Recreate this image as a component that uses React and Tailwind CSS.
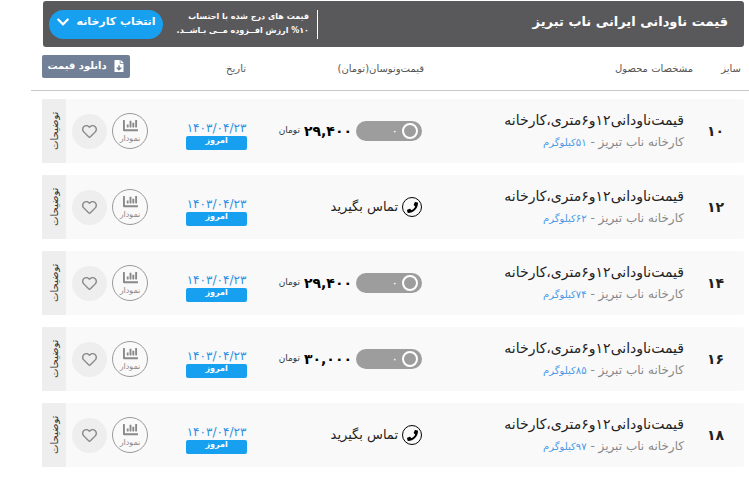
import { FaChartBar, FaChevronDown, FaFileDownload, FaPhone, FaRegHeart } from 'react-icons/fa';

const rows = [
  { size: '۱۰', weight: '۵۱', price: '۲۹,۴۰۰' },
  { size: '۱۲', weight: '۶۲', price: null },
  { size: '۱۴', weight: '۷۴', price: '۲۹,۴۰۰' },
  { size: '۱۶', weight: '۸۵', price: '۳۰,۰۰۰' },
  { size: '۱۸', weight: '۹۷', price: null },
];

const PriceHeader = () => (
  <header className="flex h-[46px] items-center rounded-[3px] bg-[#59595b] pr-4 pl-1.5 ml-[43px] mr-[5px] text-white">
    <h1 className="flex-1 whitespace-nowrap pb-1 text-[13px] font-bold">
      قیمت ناودانی ایرانی ناب تبریز
    </h1>
    <p className="w-[139px] whitespace-nowrap border-r border-white pr-2 pb-px text-[8px] leading-[14px] font-bold">
      قیمت های درج شده با احتساب
      <br />
      %۱۰ ارزش افــزوده مــی بـاشــد.
    </p>
    <button
      type="button"
      className="mr-4 flex h-[29px] w-[114px] items-center justify-center gap-1.5 whitespace-nowrap rounded-full bg-[#18a0f0] pb-1 text-[11px] font-bold"
    >
      انتخاب کارخانه
      <FaChevronDown className="size-3.5" aria-hidden="true" />
    </button>
  </header>
);

const Price = ({ price }) => {
  if (!price) {
    return (
      <a href="#call" className="flex items-center gap-1 text-[13px] text-[#222]">
        <span className="flex size-5 items-center justify-center rounded-full border border-black text-black">
          <FaPhone className="size-[11px]" aria-hidden="true" />
        </span>
        تماس بگیرید
      </a>
    );
  }

  return (
    <div className="flex items-center gap-1 whitespace-nowrap">
      <span className="flex h-5 w-[66px] items-center gap-1 rounded-full bg-[#9d9d9d] pr-1 text-[12px] text-white">
        <span className="size-4 rounded-full border-2 border-white"></span>
        ۰
      </span>
      <span className="text-[14px] font-bold text-black">{price}</span>
      <span className="text-[9px] text-[#333]">تومان</span>
    </div>
  );
};

const ProductRow = ({ size, weight, price }) => (
  <tr className="flex h-16 items-center rounded-[3px] bg-[#f9f9f9] ml-[42px] mr-[5px]">
    <td className="w-[60px] pr-5 text-[14px] font-bold text-[#222]">{size}</td>
    <td className="flex-1 whitespace-nowrap">
      <div className="text-[14px] leading-[22px] text-[#222]">قیمت‌ناودانی۱۲و۶متری،کارخانه</div>
      <div className="text-[12px] leading-[22px] text-[#888]">
        کارخانه ناب تبریز - <span className="text-[10px] text-[#4a98e8]">{weight}کیلوگرم</span>
      </div>
    </td>
    <td className="w-[175px]">
      <Price price={price} />
    </td>
    <td className="w-[61px] pt-2 text-center">
      <div className="text-[12px] leading-4 text-[#2b8fe8]">۱۴۰۳/۰۴/۲۳</div>
      <div className="h-3.5 rounded-xs bg-[#18a0f0] text-[8px] leading-[10px] font-bold text-white">امروز</div>
    </td>
    <td className="mr-[38px] flex items-center gap-[5px]">
      <button
        type="button"
        className="flex size-9 flex-col items-center justify-center rounded-full border border-[#999] text-[#888]"
      >
        <FaChartBar className="size-[15px]" aria-hidden="true" />
        <span className="text-[8px] leading-3">نمودار</span>
      </button>
      <button
        type="button"
        aria-label="علاقه‌مندی"
        className="flex size-[35px] items-center justify-center rounded-full bg-[#eeeeee] text-[#888]"
      >
        <FaRegHeart className="size-[15px]" aria-hidden="true" />
      </button>
    </td>
    <td className="mr-[6px] flex h-full w-6">
      <button
        type="button"
        className="flex w-full rotate-180 items-center justify-center bg-[#eeeeee] text-[10px] text-[#333] [writing-mode:vertical-rl]"
      >
        توضیحات
      </button>
    </td>
  </tr>
);

const App = () => (
  <main dir="rtl" className="bg-white pt-px font-['DejaVu_Sans',sans-serif]">
    <PriceHeader />
    <table className="block">
      <thead className="block">
        <tr className="flex h-[44px] items-center border-b border-[#c8c8c8] ml-[31px] pl-[11px] pr-2 text-right text-[10px] whitespace-nowrap text-[#555]">
          <th className="w-12 font-normal">سایز</th>
          <th className="flex-1 font-normal">مشخصات محصول</th>
          <th className="w-[178px] font-normal">قیمت‌ونوسان(تومان)</th>
          <th className="w-[116px] font-normal">تاریخ</th>
          <th className="flex w-[88px] pb-1">
            <button
              type="button"
              className="flex h-[23px] w-full items-center justify-center gap-1.5 rounded-xs bg-[#718096] pb-0.5 text-[10px] font-bold text-white"
            >
              <FaFileDownload className="size-3" aria-hidden="true" />
              دانلود قیمت
            </button>
          </th>
        </tr>
      </thead>
      <tbody className="flex flex-col gap-3 pt-2">
        {rows.map((row) => (
          <ProductRow key={row.size} {...row} />
        ))}
      </tbody>
    </table>
  </main>
);

export default App;
